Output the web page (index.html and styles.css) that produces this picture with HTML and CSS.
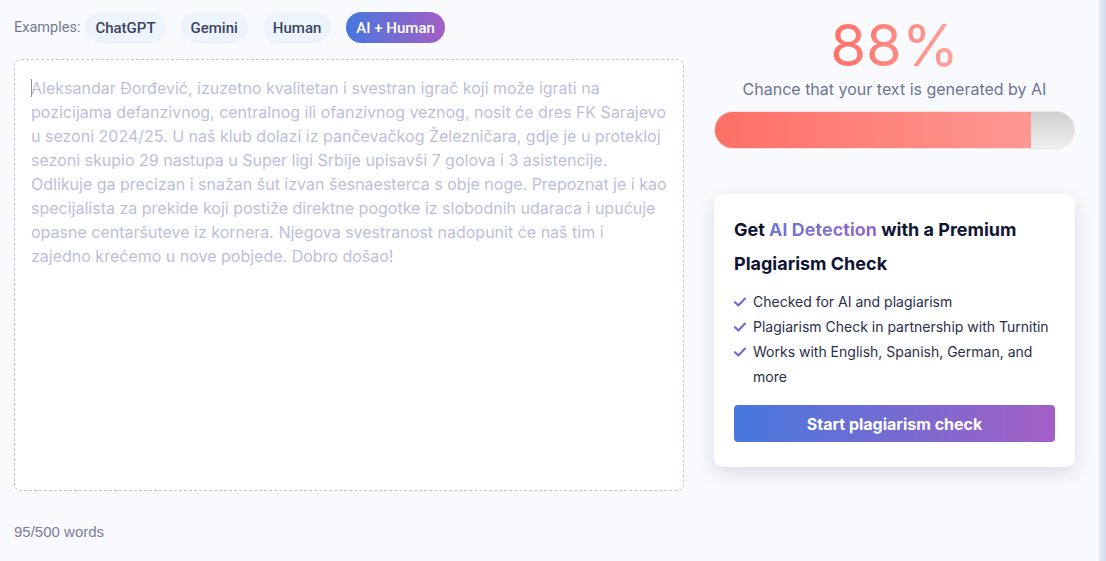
FILE: index.html
```html
<!DOCTYPE html>
<html lang="en">
<head>
<meta charset="utf-8">
<title>AI Detector</title>
<link rel="stylesheet" href="styles.css">
</head>
<body>
<div class="page">
  <div class="main">
    <section class="left">
      <div class="examples">
        <span class="ex-label">Examples:</span>
        <button class="pill">ChatGPT</button>
        <button class="pill">Gemini</button>
        <button class="pill">Human</button>
        <button class="pill active">AI + Human</button>
      </div>
      <div class="editor"><span class="caret"></span>Aleksandar Đorđević, izuzetno kvalitetan i svestran igrač koji može igrati na pozicijama defanzivnog, centralnog ili ofanzivnog veznog, nosit će dres FK Sarajevo u sezoni 2024/25. U naš klub dolazi iz pančevačkog Železničara, gdje je u protekloj sezoni skupio 29 nastupa u Super ligi Srbije upisavši 7 golova i 3 asistencije. Odlikuje ga precizan i snažan šut izvan šesnaesterca s obje noge. Prepoznat je i kao specijalista za prekide koji postiže direktne pogotke iz slobodnih udaraca i upućuje opasne centaršuteve iz kornera. Njegova svestranost nadopunit će naš tim i zajedno krećemo u nove pobjede. Dobro došao!</div>
      <div class="count">95/500 words</div>
    </section>
    <aside class="right">
      <div class="score">88%</div>
      <div class="caption">Chance that your text is generated by AI</div>
      <div class="bar"><div class="fill" style="width:88%"></div></div>
      <div class="card">
        <h2 class="card-title">Get <span class="hl">AI Detection</span> with a Premium Plagiarism Check</h2>
        <ul class="features">
          <li><svg class="check" viewBox="0 0 12 10" width="12" height="10"><path d="M1 5.2 L4.3 8.4 L11 1.6" fill="none" stroke="#7a68d2" stroke-width="2.2" stroke-linecap="round" stroke-linejoin="round"/></svg><span>Checked for AI and plagiarism</span></li>
          <li><svg class="check" viewBox="0 0 12 10" width="12" height="10"><path d="M1 5.2 L4.3 8.4 L11 1.6" fill="none" stroke="#7a68d2" stroke-width="2.2" stroke-linecap="round" stroke-linejoin="round"/></svg><span>Plagiarism Check in partnership with Turnitin</span></li>
          <li><svg class="check" viewBox="0 0 12 10" width="12" height="10"><path d="M1 5.2 L4.3 8.4 L11 1.6" fill="none" stroke="#7a68d2" stroke-width="2.2" stroke-linecap="round" stroke-linejoin="round"/></svg><span>Works with English, Spanish, German, and more</span></li>
        </ul>
        <button class="cta">Start plagiarism check</button>
      </div>
    </aside>
  </div>
  <div class="edge"></div>
</div>
</body>
</html>
```

FILE: styles.css
```css
* { box-sizing: border-box; }
html, body { margin: 0; padding: 0; }
body {
  background: #f9fafe;
  font-family: Inter, "Noto Sans", sans-serif;
  width: 1106px;
  height: 561px;
  overflow: hidden;
}
.page {
  display: flex;
  height: 561px;
}
.main {
  flex: 1;
  display: flex;
  gap: 30px;
  padding: 12px 0 0 14px;
}
.edge {
  width: 7px;
  background: linear-gradient(90deg, #e3e9f5, #d3dcef);
}
.left {
  width: 670px;
  display: flex;
  flex-direction: column;
}
.examples {
  display: flex;
  align-items: center;
  gap: 15px;
  height: 31px;
}
.ex-label {
  font-family: Roboto, sans-serif;
  font-size: 14.5px;
  color: #737a90;
  margin-right: -10px;
}
.pill {
  font-family: Roboto, sans-serif;
  font-weight: 500;
  font-size: 15px;
  color: #3b4562;
  background: #edf4fd;
  border: none;
  border-radius: 16px;
  height: 31px;
  padding: 0 10px;
  cursor: pointer;
}
.pill.active {
  color: #fff;
  background: linear-gradient(90deg, #4677dd, #a45fc5);
}
.editor {
  margin-top: 16px;
  height: 432px;
  background: #fff;
  border: 1px dashed #c3c6da;
  border-radius: 7px;
  padding: 16px 16px;
  font-size: 16px;
  line-height: 24px;
  color: #bcbfdc;
}
.caret {
  display: inline-block;
  width: 1px;
  height: 18px;
  background: #8c90a8;
  vertical-align: -3px;
  margin-right: -1px;
}
.count {
  margin-top: 32px;
  font-family: "Liberation Sans", Arial, sans-serif;
  font-size: 15px;
  color: #7b8098;
}
.right {
  width: 361px;
  display: flex;
  flex-direction: column;
  align-items: center;
}
.score {
  font-size: 58px;
  line-height: 66px;
  font-weight: 400;
  background: linear-gradient(90deg, #ff6e64, #ffa39d);
  -webkit-background-clip: text;
  background-clip: text;
  color: transparent;
}
.caption {
  font-size: 16px;
  color: #6c7590;
  margin-top: 1px;
}
.bar {
  margin-top: 12px;
  width: 361px;
  height: 38px;
  border-radius: 19px;
  background: linear-gradient(180deg, #cfcfcf, #efefef);
  overflow: hidden;
  border: 1px solid #f5dede;
}
.fill {
  height: 100%;
  background: linear-gradient(90deg, #ff6f66, #ff9892);
}
.card {
  margin-top: 45px;
  width: 361px;
  background: #fff;
  border-radius: 9px;
  box-shadow: 0 6px 18px rgba(30, 40, 70, 0.14);
  padding: 19px 20px 25px;
}
.card-title {
  margin: 0;
  font-size: 18px;
  line-height: 34px;
  font-weight: 700;
  color: #0f1433;
}
.hl {
  background: linear-gradient(90deg, #6f78db, #8f63c9);
  -webkit-background-clip: text;
  background-clip: text;
  color: transparent;
}
.features {
  list-style: none;
  margin: 8px 0 0;
  padding: 0;
}
.features li {
  display: flex;
  align-items: flex-start;
  gap: 7px;
  font-size: 14px;
  line-height: 25px;
  color: #2a2f4a;
}
.check {
  flex: none;
  margin-top: 8px;
}
.cta {
  margin-top: 16px;
  width: 100%;
  height: 37px;
  border: none;
  border-radius: 4px;
  background: linear-gradient(90deg, #4678de, #a45fc5);
  color: #fff;
  font-family: Inter, sans-serif;
  font-weight: 700;
  font-size: 16px;
  cursor: pointer;
}
```
